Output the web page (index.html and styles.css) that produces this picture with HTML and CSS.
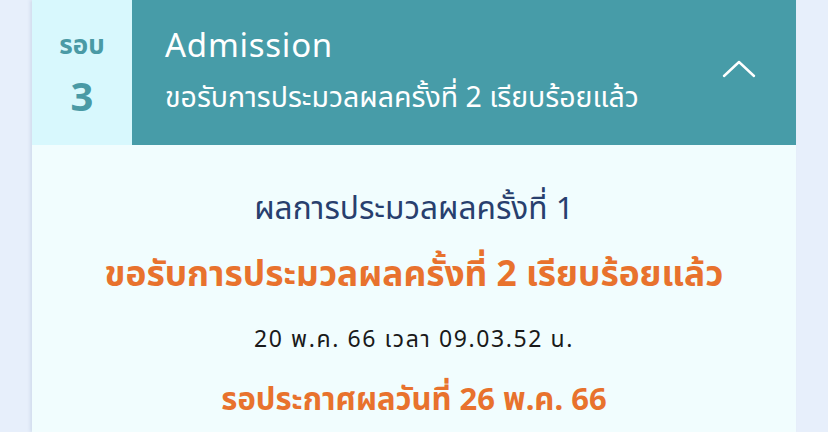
FILE: index.html
```html
<!DOCTYPE html>
<html lang="th">
<head>
<meta charset="utf-8">
<link rel="stylesheet" href="styles.css">
</head>
<body>
<div class="page">
  <div class="card">
    <div class="head">
      <div class="round">
        <div class="round-label">รอบ</div>
        <div class="round-num">3</div>
      </div>
      <div class="title">
        <div class="title-text">
          <div class="title-main">Admission</div>
          <div class="title-sub">ขอรับการประมวลผลครั้งที่ 2 เรียบร้อยแล้ว</div>
        </div>
        <svg class="chev" width="34" height="20" viewBox="0 0 34 20"><path d="M2 17 L17 3 L32 17" fill="none" stroke="#ffffff" stroke-width="2.4" stroke-linecap="round" stroke-linejoin="round"/></svg>
      </div>
    </div>
    <div class="body">
      <div class="l1">ผลการประมวลผลครั้งที่ 1</div>
      <div class="l2">ขอรับการประมวลผลครั้งที่ 2 เรียบร้อยแล้ว</div>
      <div class="l3">20 พ.ค. 66 เวลา 09.03.52 น.</div>
      <div class="l4">รอประกาศผลวันที่ 26 พ.ค. 66</div>
    </div>
  </div>
</div>
</body>
</html>
```
FILE: styles.css
```css
* { box-sizing: border-box; margin: 0; padding: 0; }
html, body { width: 828px; height: 432px; overflow: hidden; }
body { background: #e7effb; font-family: "Noto Sans", "Noto Sans Thai", "Liberation Sans", sans-serif; }
.page { padding: 0 32px; }
.card { background: #f1fdfe; height: 432px; box-shadow: -2px 0 3px rgba(150,170,200,0.25); }
.head { display: flex; height: 145px; }
.round { width: 100px; background: #d8f8fd; display: flex; flex-direction: column; align-items: center; padding-top: 29px; color: #4a9aa5; font-weight: 700; }
.round-label { font-size: 26px; line-height: 30px; }
.round-num { font-size: 40px; line-height: 50px; margin-top: 12px; }
.title { flex: 1; background: #479ca8; display: flex; align-items: flex-start; padding: 25px 40px 0 33px; color: #fff; }
.title-text { flex: 1; }
.title-main { font-size: 33px; line-height: 40px; letter-spacing: 0.75px; }
.title-sub { font-size: 28.5px; line-height: 40px; margin-top: 11px; }
.chev { margin-top: 34px; }
.body { text-align: center; padding-top: 37px; }
.l1 { color: #283f6e; font-size: 31.6px; line-height: 50px; }
.l2 { color: #e8722d; font-size: 35.3px; font-weight: 700; line-height: 80px; }
.l3 { color: #1a1a1a; font-size: 23px; line-height: 52px; letter-spacing: 1.6px; }
.l4 { color: #e8722d; font-size: 31px; font-weight: 700; line-height: 68px; }
```
